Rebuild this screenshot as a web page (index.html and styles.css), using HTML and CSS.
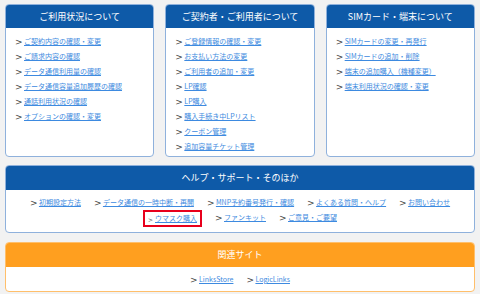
FILE: index.html
```html
<!DOCTYPE html>
<html lang="ja">
<head>
  <meta charset="UTF-8" />
  <meta name="viewport" content="width=device-width, initial-scale=1.0" />
  <title>メニュー</title>
  <link rel="stylesheet" href="styles.css">
</head>
<body>
  <div class="cols">
    <div class="card">
      <h2 class="card-head">ご利用状況について</h2>
      <ul class="list">
        <li><a href="#">ご契約内容の確認・変更</a></li>
        <li><a href="#">ご請求内容の確認</a></li>
        <li><a href="#">データ通信利用量の確認</a></li>
        <li><a href="#">データ通信容量追加履歴の確認</a></li>
        <li><a href="#">通話利用状況の確認</a></li>
        <li><a href="#">オプションの確認・変更</a></li>
      </ul>
    </div>
    <div class="card">
      <h2 class="card-head">ご契約者・ご利用者について</h2>
      <ul class="list">
        <li><a href="#">ご登録情報の確認・変更</a></li>
        <li><a href="#">お支払い方法の変更</a></li>
        <li><a href="#">ご利用者の追加・変更</a></li>
        <li><a href="#">LP確認</a></li>
        <li><a href="#">LP購入</a></li>
        <li><a href="#">購入手続き中LPリスト</a></li>
        <li><a href="#">クーポン管理</a></li>
        <li><a href="#">追加容量チケット管理</a></li>
      </ul>
    </div>
    <div class="card">
      <h2 class="card-head">SIMカード・端末について</h2>
      <ul class="list">
        <li><a href="#">SIMカードの変更・再発行</a></li>
        <li><a href="#">SIMカードの追加・削除</a></li>
        <li><a href="#">端末の追加購入（機種変更）</a></li>
        <li><a href="#">端末利用状況の確認・変更</a></li>
      </ul>
    </div>
  </div>

  <div class="card help">
    <h2 class="card-head">ヘルプ・サポート・そのほか</h2>
    <ul class="inline">
      <li><a href="#">初期設定方法</a></li>
      <li><a href="#">データ通信の一時中断・再開</a></li>
      <li><a href="#">MNP予約番号発行・確認</a></li>
      <li><a href="#">よくある質問・ヘルプ</a></li>
      <li><a href="#">お問い合わせ</a></li>
      <li class="mark"><a href="#">ウマスク購入</a></li>
      <li><a href="#">ファンキット</a></li>
      <li><a href="#">ご意見・ご要望</a></li>
    </ul>
  </div>

  <div class="card related">
    <h2 class="card-head">関連サイト</h2>
    <ul class="inline">
      <li><a href="#">LinksStore</a></li>
      <li><a href="#">LogicLinks</a></li>
    </ul>
  </div>
</body>
</html>
```

FILE: styles.css
```css
body {
  margin: 0;
  padding: 4px 5px;
  background: #f2f2f2;
  font-family: "Noto Sans CJK JP", "Noto Sans", sans-serif;
}
ul {
  list-style: none;
  margin: 0;
}
a {
  color: #3d8ae0;
  text-decoration: underline;
}
.cols {
  display: grid;
  grid-template-columns: 1fr 1fr 1fr;
  column-gap: 11px;
}
.card {
  background: white;
  border: 1px solid #8fb1dc;
  border-radius: 4px;
  overflow: hidden;
  height: 151px;
}
.card-head {
  margin: 0;
  height: 23px;
  line-height: 23px;
  background: #0e5aa8;
  color: white;
  font-size: 9px;
  font-weight: normal;
  text-align: center;
}
.list {
  padding: 6px 0 0 9px;
}
.list li, .inline li {
  font-size: 7px;
  line-height: 15px;
  white-space: nowrap;
}
.list li::before, .inline li::before {
  content: ">";
  display: inline-block;
  width: 9px;
  color: #444;
  font-family: "DejaVu Sans", sans-serif;
  font-size: 9px;
  line-height: 10px;
  vertical-align: -1px;
}
.help {
  margin-top: 8px;
  height: auto;
}
.help .card-head {
  height: 24px;
  line-height: 24px;
}
.inline {
  display: flex;
  flex-wrap: wrap;
  justify-content: center;
  column-gap: 13px;
  padding: 5px 8px 5px;
}
.inline .mark {
  border: 2px solid #e8001c;
  line-height: 13px;
  padding: 0 3px 0 3px;
}
.inline .mark::before {
  width: 7px;
  font-size: 6px;
}
.related {
  margin-top: 9px;
  height: auto;
  border-color: #ffbf6b;
}
.related .card-head {
  background: #ff9f1f;
  height: 24px;
  line-height: 24px;
}
.related .inline {
  padding: 5px 8px 4px;
}
```
